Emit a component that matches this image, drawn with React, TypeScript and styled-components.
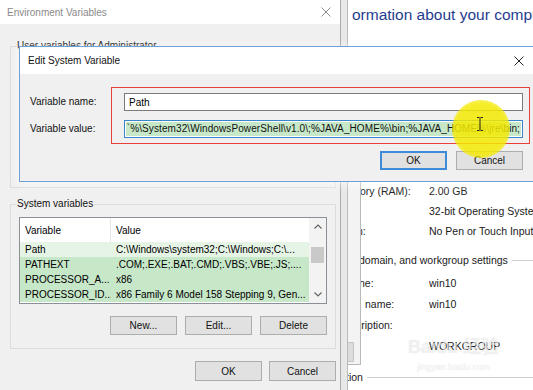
import React from "react";
import styled, { createGlobalStyle } from "styled-components";

const GlobalStyle = createGlobalStyle`
  html, body { margin: 0; padding: 0; background: #ffffff; }
  body {
    font-family: "Liberation Sans", Arial, sans-serif;
    font-size: 10px;
    color: #000;
  }
  * { box-sizing: border-box; }
`;

const Desktop = styled.div`
  position: relative;
  width: 533px;
  height: 390px;
  overflow: hidden;
  background: #ffffff;
`;

/* ---------- System (control panel) window, furthest back ---------- */
const SysWindow = styled.div`
  position: absolute;
  left: 340px;
  top: 0;
  width: 200px;
  height: 390px;
  background: #ffffff;
  display: flex;
  flex-direction: column;
  white-space: nowrap;
  overflow: hidden;
`;

const SysHeading = styled.div`
  padding: 6px 0 0 12px;
  height: 24px;
  line-height: 18px;
  font-size: 15.5px;
  color: #1f3d8f;
`;

const SysInfo = styled.div`
  margin-top: 157px;
  display: flex;
  flex-direction: column;
`;

const SysRow = styled.div<{ $h: number; $mt?: number }>`
  display: grid;
  grid-template-columns: 89px 1fr;
  height: ${(p) => p.$h}px;
  line-height: ${(p) => p.$h}px;
  margin-top: ${(p) => p.$mt ?? 0}px;
  font-size: 10.5px;
  color: #1a1a1a;
`;

const SysLabel = styled.span<{ $indent: number }>`
  padding-left: ${(p) => p.$indent}px;
  overflow: hidden;
`;

const SysValue = styled.span`
  overflow: hidden;
`;

const SysSectionHead = styled.div<{ $indent: number; $mt: number }>`
  display: flex;
  align-items: center;
  height: 20px;
  margin-top: ${(p) => p.$mt}px;
  padding-left: ${(p) => p.$indent}px;
  font-size: 10.5px;
  color: #1a1a1a;
`;

const SectionRule = styled.div`
  flex: 1;
  height: 1px;
  margin-left: 4px;
  background: #cfcfcf;
`;

/* ---------- System Properties window, between ---------- */
const SysPropsWindow = styled.div`
  position: absolute;
  left: 250px;
  top: 60px;
  width: 111px;
  height: 305px;
  background: #f3f3f3;
  border: 1px solid #b9b9b9;
  display: flex;
  flex-direction: column;
  justify-content: flex-end;
  align-items: flex-end;
  padding: 0 6px 2px 0;
`;

const ApplyButton = styled.div`
  width: 64px;
  height: 20px;
  background: #dcdcdc;
  border: 1px solid #c4c4c4;
  display: flex;
  align-items: center;
  justify-content: center;
  color: #9a9a9a;
`;

/* ---------- Environment Variables window ---------- */
const EnvWindow = styled.div`
  position: absolute;
  left: 0;
  top: 0;
  width: 341px;
  height: 390px;
  background: #f0f0f0;
  border-right: 1px solid #a9a9a9;
  box-shadow: 6px 0 0 #e8e8e8, 7px 0 0 #bcbcbc;
  display: flex;
  flex-direction: column;
`;

const TitleBar = styled.div<{ $h: number; $inactive?: boolean }>`
  flex-shrink: 0;
  height: ${(p) => p.$h}px;
  background: #ffffff;
  display: flex;
  align-items: center;
  justify-content: space-between;
  padding-left: ${(p) => (p.$inactive ? 7 : 8)}px;
  color: ${(p) => (p.$inactive ? "#8a8a8a" : "#111")};
`;

const TitleText = styled.span`
  font-size: 10px;
`;

const CloseBox = styled.div<{ $w: number }>`
  width: ${(p) => p.$w}px;
  align-self: stretch;
  display: flex;
  align-items: center;
  justify-content: center;
`;

const EnvBody = styled.div`
  flex: 1;
  display: flex;
  flex-direction: column;
  padding: 16px 4px 0 10px;
`;

const Group = styled.fieldset<{ $h?: number; $mt?: number }>`
  margin: ${(p) => p.$mt ?? 0}px 0 0 0;
  padding: 7px 8px 13px 8px;
  border: 1px solid #dcdcdc;
  min-width: 0;
  ${(p) => (p.$h ? `height: ${p.$h}px;` : "")}
`;

const Legend = styled.legend`
  padding: 0 1px 0 0;
  margin-left: -2px;
  font-size: 10px;
  line-height: 12px;
  color: #111;
`;

const ListBox = styled.div`
  height: 87px;
  border: 1px solid #8b8f96;
  background: #ffffff;
  display: flex;
`;

const Table = styled.div`
  flex: 1;
  display: flex;
  flex-direction: column;
  min-width: 0;
`;

const HeaderRow = styled.div`
  display: grid;
  grid-template-columns: 91px 1fr;
  height: 24px;
  align-items: center;
  background: #ffffff;
`;

const HeaderCell = styled.div<{ $divider?: boolean }>`
  height: 100%;
  display: flex;
  align-items: center;
  padding-left: 5px;
  border-right: ${(p) => (p.$divider ? "1px solid #e5e5e5" : "none")};
`;

const DataRow = styled.div<{ $hl: boolean }>`
  display: grid;
  grid-template-columns: 91px 1fr;
  height: 15px;
  align-items: center;
  background: ${(p) => (p.$hl ? "#c7e7c9" : "#e6f4e6")};
`;

const Cell = styled.div<{ $pl: number }>`
  padding-left: ${(p) => p.$pl}px;
  white-space: nowrap;
  overflow: hidden;
`;

const ScrollBar = styled.div`
  width: 17px;
  background: #f3f3f3;
  display: flex;
  flex-direction: column;
  align-items: center;
`;

const ScrollArrow = styled.div`
  height: 17px;
  width: 17px;
  display: flex;
  align-items: center;
  justify-content: center;
`;

const ScrollTrack = styled.div`
  flex: 1;
  width: 100%;
  padding: 12px 2px 0 2px;
`;

const ScrollThumb = styled.div`
  height: 16px;
  background: #c9c9c9;
`;

const ButtonRow = styled.div<{ $mt: number; $gap: number }>`
  display: flex;
  justify-content: flex-end;
  gap: ${(p) => p.$gap}px;
  margin-top: ${(p) => p.$mt}px;
`;

const Button = styled.div<{ $primary?: boolean; $h?: number }>`
  width: 67px;
  height: ${(p) => p.$h ?? 19}px;
  display: flex;
  align-items: center;
  justify-content: center;
  background: #e1e1e1;
  border: ${(p) => (p.$primary ? "2px solid #3f8bd8" : "1px solid #adadad")};
  font-size: 10px;
  color: #111;
`;

/* ---------- Edit System Variable dialog ---------- */
const Dialog = styled.div`
  position: absolute;
  left: 19px;
  top: 46px;
  width: 517px;
  height: 136px;
  background: #f0f0f0;
  border: 1px solid #6ea0d6;
  box-shadow: 0 2px 10px rgba(255, 255, 255, 0.7);
  display: flex;
  flex-direction: column;
`;

const DialogBody = styled.div`
  flex: 1;
  padding: 13px 12px 0 10px;
  display: flex;
  flex-direction: column;
`;

const FormRow = styled.div`
  display: flex;
`;

const LabelCol = styled.div`
  flex: 0 0 81px;
  padding-top: 6px;
  display: flex;
  flex-direction: column;
  gap: 9px;
`;

const FieldLabel = styled.div`
  height: 18px;
  line-height: 18px;
  font-size: 10px;
  color: #111;
`;

const Annotation = styled.div`
  flex: 1;
  min-width: 0;
  margin-right: -7px;
  border: 1px solid #e8413c;
  padding: 5px 6px 5px 12px;
  display: flex;
  flex-direction: column;
  gap: 9px;
`;

const TextField = styled.div<{ $focused?: boolean }>`
  height: 18px;
  min-width: 0;
  background: #ffffff;
  border: 1px solid ${(p) => (p.$focused ? "#3a84c9" : "#7a7a7a")};
  display: flex;
  align-items: center;
  justify-content: ${(p) => (p.$focused ? "flex-end" : "flex-start")};
  padding: 0 1px 0 4px;
  overflow: hidden;
  white-space: nowrap;
  font-size: 10px;
`;

const Selection = styled.span`
  flex-shrink: 0;
  background: #c6e8c9;
  line-height: 14px;
  padding: 0 1px;
  letter-spacing: 0.1px;
  color: #111;
`;

/* ---------- overlays ---------- */
const Spotlight = styled.div`
  position: absolute;
  left: 452px;
  top: 100px;
  width: 58px;
  height: 58px;
  border-radius: 50%;
  background: radial-gradient(
    circle,
    rgba(244, 234, 0, 0.86) 0%,
    rgba(244, 234, 0, 0.84) 62%,
    rgba(244, 234, 0, 0.35) 85%,
    rgba(244, 234, 0, 0) 100%
  );
  pointer-events: none;
`;

const Cursor = styled.svg`
  position: absolute;
  left: 476px;
  top: 117px;
`;

const Watermark = styled.div`
  position: absolute;
  left: 408px;
  top: 336px;
  display: flex;
  flex-direction: column;
  align-items: center;
  gap: 4px;
  color: rgba(255, 255, 255, 0.55);
  text-shadow: 0 0 1px rgba(160, 160, 160, 0.35);
  pointer-events: none;
`;

const WmBig = styled.div`
  font-size: 18px;
  font-weight: bold;
  line-height: 22px;
  font-family: "Liberation Sans", "Noto Sans CJK SC", sans-serif;
`;

const WmSmall = styled.div`
  font-size: 9px;
  line-height: 11px;
`;

const CloseIcon = ({ color, size }: { color: string; size: number }) => (
  <svg width={size} height={size} viewBox="0 0 10 10">
    <path d="M0.5 0.5 L9.5 9.5 M9.5 0.5 L0.5 9.5" stroke={color} strokeWidth="1" fill="none" />
  </svg>
);

const Chevron = ({ up }: { up?: boolean }) => (
  <svg width="8" height="5" viewBox="0 0 8 5">
    <path
      d={up ? "M0.5 4.5 L4 1 L7.5 4.5" : "M0.5 0.5 L4 4 L7.5 0.5"}
      stroke="#606060"
      strokeWidth="1.1"
      fill="none"
    />
  </svg>
);

const rows = [
  { name: "Path", value: "C:\\Windows\\system32;C:\\Windows;C:\\...", hl: false },
  { name: "PATHEXT", value: ".COM;.EXE;.BAT;.CMD;.VBS;.VBE;.JS;....", hl: true },
  { name: "PROCESSOR_A...", value: "x86", hl: true },
  { name: "PROCESSOR_ID...", value: "x86 Family 6 Model 158 Stepping 9, Gen...", hl: true },
];

export default function App() {
  return (
    <>
      <GlobalStyle />
      <Desktop>
        <SysWindow>
          <SysHeading>ormation about your computer</SysHeading>
          <SysInfo>
            <SysRow $h={20}>
              <SysLabel $indent={20}>ory (RAM):</SysLabel>
              <SysValue>2.00 GB</SysValue>
            </SysRow>
            <SysRow $h={20}>
              <SysLabel $indent={20}></SysLabel>
              <SysValue>32-bit Operating System, x86-based processor</SysValue>
            </SysRow>
            <SysRow $h={20}>
              <SysLabel $indent={17}>n:</SysLabel>
              <SysValue>No Pen or Touch Input is available</SysValue>
            </SysRow>
            <SysSectionHead $indent={19} $mt={9}>
              domain, and workgroup settings
              <SectionRule />
            </SysSectionHead>
            <SysRow $h={21} $mt={3}>
              <SysLabel $indent={19}>ne:</SysLabel>
              <SysValue>win10</SysValue>
            </SysRow>
            <SysRow $h={21}>
              <SysLabel $indent={25}>name:</SysLabel>
              <SysValue>win10</SysValue>
            </SysRow>
            <SysRow $h={21}>
              <SysLabel $indent={16}>cription:</SysLabel>
              <SysValue></SysValue>
            </SysRow>
            <SysRow $h={21}>
              <SysLabel $indent={16}></SysLabel>
              <SysValue>WORKGROUP</SysValue>
            </SysRow>
            <SysSectionHead $indent={6} $mt={10}>
              tion
              <SectionRule />
            </SysSectionHead>
          </SysInfo>
        </SysWindow>

        <SysPropsWindow>
          <ApplyButton>Apply</ApplyButton>
        </SysPropsWindow>

        <EnvWindow>
          <TitleBar $h={24} $inactive>
            <TitleText>Environment Variables</TitleText>
            <CloseBox $w={28}>
              <CloseIcon color="#8a8a8a" size={10} />
            </CloseBox>
          </TitleBar>
          <EnvBody>
            <Group $h={148}>
              <Legend>User variables for Administrator</Legend>
            </Group>
            <Group $mt={10}>
              <Legend>System variables</Legend>
              <ListBox>
                <Table>
                  <HeaderRow>
                    <HeaderCell $divider>Variable</HeaderCell>
                    <HeaderCell>Value</HeaderCell>
                  </HeaderRow>
                  {rows.map((r) => (
                    <DataRow key={r.name} $hl={r.hl}>
                      <Cell $pl={5}>{r.name}</Cell>
                      <Cell $pl={5}>{r.value}</Cell>
                    </DataRow>
                  ))}
                </Table>
                <ScrollBar>
                  <ScrollArrow>
                    <Chevron up />
                  </ScrollArrow>
                  <ScrollTrack>
                    <ScrollThumb />
                  </ScrollTrack>
                  <ScrollArrow>
                    <Chevron />
                  </ScrollArrow>
                </ScrollBar>
              </ListBox>
              <ButtonRow $mt={12} $gap={8}>
                <Button>New...</Button>
                <Button>Edit...</Button>
                <Button>Delete</Button>
              </ButtonRow>
            </Group>
            <ButtonRow $mt={12} $gap={7}>
              <Button $h={20}>OK</Button>
              <Button $h={20}>Cancel</Button>
            </ButtonRow>
          </EnvBody>
        </EnvWindow>

        <Dialog>
          <TitleBar $h={27}>
            <TitleText>Edit System Variable</TitleText>
            <CloseBox $w={32}>
              <CloseIcon color="#222" size={10} />
            </CloseBox>
          </TitleBar>
          <DialogBody>
            <FormRow>
              <LabelCol>
                <FieldLabel>Variable name:</FieldLabel>
                <FieldLabel>Variable value:</FieldLabel>
              </LabelCol>
              <Annotation>
                <TextField>Path</TextField>
                <TextField $focused>
                  <Selection>
                    `%\System32\WindowsPowerShell\v1.0\;%JAVA_HOME%\bin;%JAVA_HOME%\jre\bin;
                  </Selection>
                </TextField>
              </Annotation>
            </FormRow>
            <ButtonRow $mt={7} $gap={9}>
              <Button $primary>OK</Button>
              <Button>Cancel</Button>
            </ButtonRow>
          </DialogBody>
        </Dialog>

        <Spotlight />
        <Cursor width="8" height="14" viewBox="0 0 8 14">
          <path d="M1 0.5 H3.5 M4.5 0.5 H7 M4 1 V13 M1 13.5 H3.5 M4.5 13.5 H7" stroke="#222" strokeWidth="1" fill="none" />
        </Cursor>

        <Watermark>
          <WmBig>Baidu 经验</WmBig>
          <WmSmall>jingyan.baidu.com</WmSmall>
        </Watermark>
      </Desktop>
    </>
  );
}
